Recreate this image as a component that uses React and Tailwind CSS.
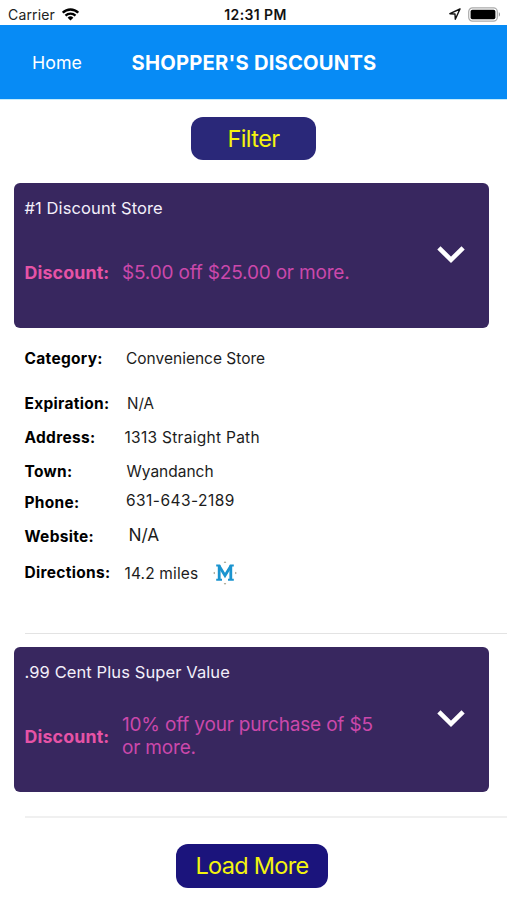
const DETAILS = [
  { label: 'Category:',   value: 'Convenience Store',  row: 'h-[62px]', text: 'pl-[1.5px] text-[15.5px]' },
  { label: 'Expiration:', value: 'N/A',                row: 'h-[28px]', text: 'pl-[2.5px] text-[15.2px]' },
  { label: 'Address:',    value: '1313 Straight Path', row: 'h-[39px]', text: 'text-[15.5px] tracking-[0.28px]' },
  { label: 'Town:',       value: 'Wyandanch',          row: 'h-[29px]', text: 'pl-[2px] text-[15.5px]' },
  { label: 'Phone:',      value: '631-643-2189',       row: 'h-[33px]', text: 'pl-[1.5px] -mt-[3px] text-[15.5px] tracking-[0.45px]' },
  { label: 'Website:',    value: 'N/A',                row: 'h-[35px]', text: 'pl-[4px] -mt-[3px] text-[17.3px]' },
  { label: 'Directions:', value: '14.2 miles',         row: 'h-[38px]', text: 'pt-px text-[15.5px] tracking-[0.15px]', map: true },
];

function WifiIcon() {
  return (
    <svg width="17" height="13" viewBox="0 0 17 13" fill="none" stroke="#000" strokeWidth="2.3">
      <path d="M.8 4.7a10.9 10.9 0 0 1 15.4 0"/>
      <path d="M3.5 7.6a7.1 7.1 0 0 1 10 0"/>
      <path d="M8.5 12.6 5.6 9.7a4.1 4.1 0 0 1 5.8 0z" fill="#000" stroke="none"/>
    </svg>
  );
}

function LocationIcon() {
  return (
    <svg width="12" height="12" viewBox="0 0 12 12" fill="none" stroke="#111" strokeWidth="1.4" strokeLinejoin="round">
      <path d="M11 1 .9 5.7l5.1.3.3 5.2z"/>
    </svg>
  );
}

function BatteryIcon() {
  return (
    <svg width="33" height="15" viewBox="0 0 33 15">
      <rect x="0.7" y="0.9" width="28.6" height="13.2" rx="3.8" fill="#fff" stroke="#aaa" strokeWidth="1.2"/>
      <rect x="2.6" y="2.8" width="24.8" height="9.4" rx="1.8" fill="#000"/>
      <path d="M30.8 5.3c1.6.6 1.6 3.8 0 4.4z" fill="#999"/>
    </svg>
  );
}

function ChevronIcon() {
  return (
    <svg width="28" height="18" viewBox="0 0 28 18" fill="none" stroke="#fff" strokeWidth="4.6">
      <path d="M1.9 1.9 14 13.8 26.1 1.9"/>
    </svg>
  );
}

function MapIcon() {
  return (
    <svg width="24" height="24" viewBox="0 0 24 24">
      <g fill="none" stroke="#1b94cf">
        <path d="M6.2 4.6v13.6M17.8 4.6v13.6" strokeWidth="2.8"/>
        <path d="M6 4.8 12 14.6l6-9.8" strokeWidth="2.8"/>
        <path d="M3.2 4.5h4M16.8 4.5h4M3.2 18.8h5.8M15 18.8h5.8" strokeWidth="2"/>
      </g>
      <g fill="#aaa794">
        <path d="M12 0l1.3 2h-2.6z"/>
        <path d="M12 24l1.3-2h-2.6z"/>
        <path d="M0 12l2-1.3v2.6z"/>
        <path d="M24 12l-2-1.3v2.6z"/>
      </g>
    </svg>
  );
}

function StatusBar() {
  return (
    <div className="grid h-[25px] grid-cols-3 items-center pt-[3px] pr-[6px] pl-[8px]">
      <div className="flex items-center gap-[7px] text-[14px] tracking-[0.15px] text-[#222]">
        Carrier
        <WifiIcon />
      </div>
      <div className="pl-[2px] text-center text-[14px] font-semibold tracking-[0.4px] text-[#111]">12:31 PM</div>
      <div className="flex items-center justify-end gap-[7px]">
        <LocationIcon />
        <BatteryIcon />
      </div>
    </div>
  );
}

function StoreCard({ name, discount }) {
  return (
    <section className="mx-[14px] flex h-[145px] w-[475px] items-center rounded-[6px] bg-[#38275f] pr-[24px] pl-[10.5px]">
      <div className="flex h-full flex-1 flex-col">
        <h2 className="pt-[12px] text-[16.5px] leading-[26px] tracking-[0.1px] text-[#f3effa]">{name}</h2>
        <div className="flex h-[102px] items-center">
          <span className="w-[97.5px] pt-[2px] text-[17.8px] font-bold tracking-[0.15px] text-[#e653a6]">Discount:</span>
          <p className="w-[265px] text-[19px] leading-[23px] tracking-[-0.18px] text-[#cb48ab]">{discount}</p>
        </div>
      </div>
      <div className="-mt-px">
        <ChevronIcon />
      </div>
    </section>
  );
}

export default function App() {
  return (
    <div className="h-[900px] w-[507px] overflow-hidden bg-white font-['Inter','Liberation_Sans',sans-serif]">
      <StatusBar />

      <header className="flex h-[75px] items-center border-b border-[#c4ecfc] bg-[#078bf5] pt-[2px] pl-[32px] text-white">
        <a className="w-[99.5px] text-[17.8px]">Home</a>
        <h1 className="text-[20.2px] font-bold tracking-[0.2px] whitespace-nowrap">SHOPPER'S DISCOUNTS</h1>
      </header>

      <main className="flex flex-col">
        <button className="mt-[17px] ml-[191px] h-[43px] w-[125px] rounded-[12px] bg-[#2a2879] text-[23.5px] tracking-[-0.6px] text-[#f4f30e]">
          Filter
        </button>

        <div className="mt-[23px]">
          <StoreCard name="#1 Discount Store" discount="$5.00 off $25.00 or more." />
        </div>

        <dl className="pb-[41px] pl-[24.5px]">
          {DETAILS.map((d) => (
            <div key={d.label} className={`flex items-center ${d.row}`}>
              <dt className="w-[100px] text-[15.5px] font-bold tracking-[0.3px] text-black">{d.label}</dt>
              <dd className={`text-[#1c1c1c] ${d.text}`}>{d.value}</dd>
              {d.map && <span className="ml-[15px]"><MapIcon /></span>}
            </div>
          ))}
        </dl>
        <hr className="ml-[25px] border-t border-[#e3e3e3]" />

        <div className="mt-[13px]">
          <StoreCard name=".99 Cent Plus Super Value" discount="10% off your purchase of $5 or more." />
        </div>
        <hr className="mt-[24px] ml-[25px] border-t-2 border-[#f0f0f0]" />

        <button className="mt-[26px] ml-[176px] h-[44px] w-[152px] rounded-[12px] bg-[#1b147c] text-[23.5px] tracking-[-0.7px] text-[#f4f30e]">
          Load More
        </button>
      </main>
    </div>
  );
}
